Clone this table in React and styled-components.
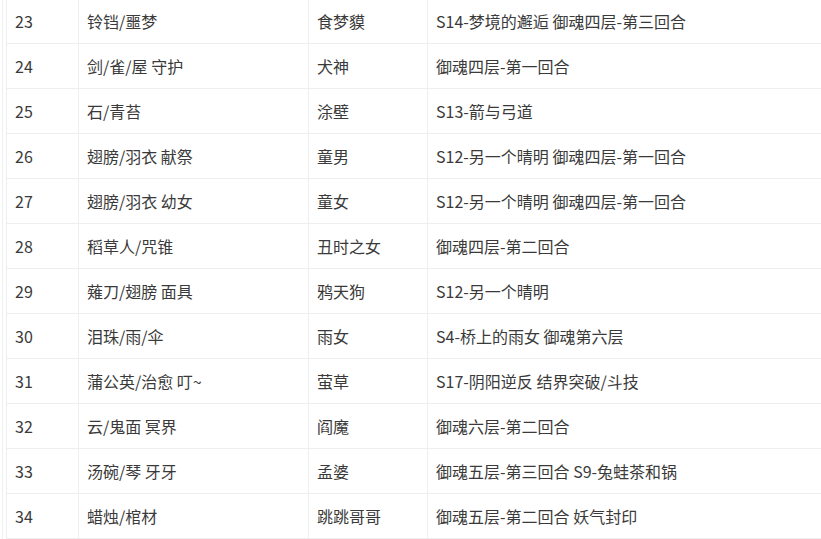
import styled, { createGlobalStyle } from "styled-components";

const rows = [
  ["23", "铃铛/噩梦", "食梦貘", "S14-梦境的邂逅 御魂四层-第三回合"],
  ["24", "剑/雀/屋 守护", "犬神", "御魂四层-第一回合"],
  ["25", "石/青苔", "涂壁", "S13-箭与弓道"],
  ["26", "翅膀/羽衣 献祭", "童男", "S12-另一个晴明 御魂四层-第一回合"],
  ["27", "翅膀/羽衣 幼女", "童女", "S12-另一个晴明 御魂四层-第一回合"],
  ["28", "稻草人/咒锥", "丑时之女", "御魂四层-第二回合"],
  ["29", "薙刀/翅膀 面具", "鸦天狗", "S12-另一个晴明"],
  ["30", "泪珠/雨/伞", "雨女", "S4-桥上的雨女 御魂第六层"],
  ["31", "蒲公英/治愈 叮~", "萤草", "S17-阴阳逆反 结界突破/斗技"],
  ["32", "云/鬼面 冥界", "阎魔", "御魂六层-第二回合"],
  ["33", "汤碗/琴 牙牙", "孟婆", "御魂五层-第三回合 S9-兔蛙茶和锅"],
  ["34", "蜡烛/棺材", "跳跳哥哥", "御魂五层-第二回合 妖气封印"],
];

const GlobalStyle = createGlobalStyle`
  html, body {
    margin: 0;
    padding: 0;
    background: #fff;
    overflow: hidden;
  }
`;

const Wrapper = styled.div`
  margin-left: 2px;
  padding-left: 3px;
  border-left: 1px solid #f0f0f0;
  overflow: hidden;
  height: 539px;
`;

const Table = styled.table`
  border-collapse: collapse;
  margin-top: -2px;
  table-layout: fixed;
  width: calc(100% + 10px);
  font-family: "Microsoft YaHei", "Noto Sans CJK SC", sans-serif;
  font-size: 16px;
  color: #3a3a3a;
`;

const Cell = styled.td`
  width: ${(p) => (p.$w ? `${p.$w}px` : "auto")};
  height: 45px;
  padding: 0 8px 1px;
  box-sizing: border-box;
  border: 1px solid #eeeeee;
  vertical-align: middle;
  white-space: nowrap;
  line-height: 20px;
`;

const widths = [72, 230, 119, null];

function App() {
  return (
    <>
      <GlobalStyle />
      <Wrapper>
        <Table>
          <tbody>
            {rows.map((r) => (
              <tr key={r[0]}>
                {r.map((text, i) => (
                  <Cell key={i} $w={widths[i]}>
                    {text}
                  </Cell>
                ))}
              </tr>
            ))}
          </tbody>
        </Table>
      </Wrapper>
    </>
  );
}

export default App;
